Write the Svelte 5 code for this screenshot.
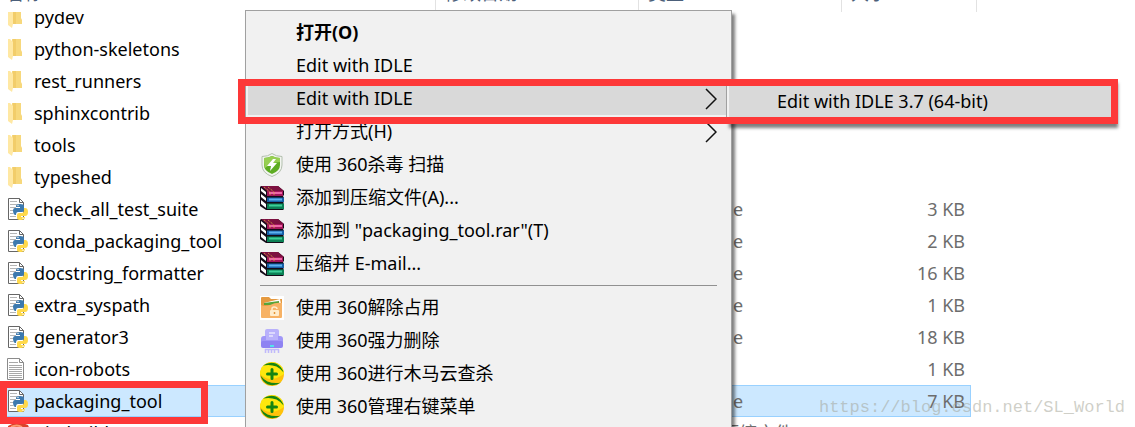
<script>
  const python = "Python File";

  // rows of the explorer list, top to bottom
  const files = [
    { name: "pydev", icon: "folder" },
    { name: "python-skeletons", icon: "folder" },
    { name: "rest_runners", icon: "folder" },
    { name: "sphinxcontrib", icon: "folder" },
    { name: "tools", icon: "folder" },
    { name: "typeshed", icon: "folder" },
    { name: "check_all_test_suite", icon: "python", type: python, size: "3 KB" },
    { name: "conda_packaging_tool", icon: "python", type: python, size: "2 KB" },
    { name: "docstring_formatter", icon: "python", type: python, size: "16 KB" },
    { name: "extra_syspath", icon: "python", type: python, size: "1 KB" },
    { name: "generator3", icon: "python", type: python, size: "18 KB" },
    { name: "icon-robots", icon: "text", type: "文本文档", size: "1 KB" },
    { name: "packaging_tool", icon: "python", type: python, size: "7 KB" },
    { name: "pip-build", icon: "archive", type: "WinRAR 压缩文件", size: "28 KB" },
  ];

  const menu = [
    { label: "打开(O)", bold: true },
    { label: "Edit with IDLE" },
    { label: "Edit with IDLE", sub: true, open: true },
    { label: "打开方式(H)", sub: true },
    { label: "使用 360杀毒 扫描", icon: "shield" },
    { label: "添加到压缩文件(A)...", icon: "rar" },
    { label: '添加到 "packaging_tool.rar"(T)', icon: "rar" },
    { label: "压缩并 E-mail...", icon: "rar" },
    null,
    { label: "使用 360解除占用", icon: "unlock" },
    { label: "使用 360强力删除", icon: "shred" },
    { label: "使用 360进行木马云查杀", icon: "safe" },
    { label: "使用 360管理右键菜单", icon: "safe" },
  ];

  let selected = $state("packaging_tool");
</script>

{#snippet fileIcon(kind)}
  <svg class="file-icon" viewBox="0 0 20 24" aria-hidden="true">
    {#if kind === "folder"}
      <path d="M4 2h9v11l1 2v4H4z" fill="#f7d87c" />
      <path d="M5 2h3v17H5z" fill="#f2cd6a" />
      <path d="M0 2h2l3 3v14l-1 4-4-3z" fill="#ffe8a3" />
    {:else if kind === "archive"}
      <path d="M0 5Q9-1 20 4l2 5v9H0z" fill="#dc432b" />
      <path d="M3 6q6-3 11 0" fill="none" stroke="#ff9d70" stroke-width="2" />
    {:else if kind === "text"}
      <path d="M-.5 1.500h12l4 4v17h-16z" fill="#fff" stroke="#8b8b8b" />
      <path d="M11.500 1.500v4h4" fill="none" stroke="#8b8b8b" />
      <path d="M1 5.500h9M1 8.500h13M1 10.500h13M1 12.500h13M1 14.500h13M1 16.500h13M1 18.500h13M1 20.500h13" stroke="#a8a8a8" />
    {:else}
      <path d="M.5 1.500h11l4 4v17H.5z" fill="#fff" stroke="#666" />
      <path d="M11.500 1.500v4h4" fill="none" stroke="#666" />
      <path d="M2 4.500h7M2 7.500h9M2 10.500h6M2 13.500h4M2 16.500h3M2 19.500h6" stroke="#b5b5b5" />
      <path d="M8 9q0-2 4-2t4 2v4q0 2-2 2h-4q-2 0-2 3H7q-2-1-2-4t2-3h5v-1H8z" fill="#3c79ae" />
      <path d="M16 11h1q3 0 3 4t-3 4h-4v1h4q0 3-4 3t-4-2v-3q0-2 2-2h3q2 0 2-3z" fill="#ffd94a" />
      <circle cx="10" cy="8.500" r=".7" fill="#fff" />
      <circle cx="15" cy="21.200" r=".7" fill="#fff" />
    {/if}
  </svg>
{/snippet}

{#snippet menuIcon(kind)}
  <svg class="menu-icon" viewBox="0 0 24 24" aria-hidden="true">
    {#if kind === "shield"}
      <path d="M12 .5q4 3 10 3V12q0 8-10 11.500Q2 20 2 12V3.500q6 0 10-3z" fill="#f2f5ef" stroke="#b3bfae" />
      <path d="M12 3q4 2 8 2v7q0 6-8 9-8-3-8-9V5q4 0 8-2z" fill="#5dac22" />
      <path d="M12 3q4 2 8 2v4Q12 9 5 15q-1-2-1-10 4 0 8-2z" fill="#97cf52" />
      <path d="M13 6 7 13h4l-1 5 7-8h-4l3-4z" fill="#fff" />
    {:else if kind === "rar"}
      <!-- three stacked books, spines to the right, pages to the left -->
      <path d="M1 0h17l6 5v4l-1 1 1 2v4l-1 1 1 1v5l-1 1H6l-6-4V1z" fill="#140b18" />
      <path d="M1 0h17l6 5H7z" fill="#7d1040" />
      <path d="M7 5h16v5H7z" fill="#a3165a" />
      <path d="M9 7h13" stroke="#ee66a8" stroke-width="2" />
      <path d="M7 11.500h17V16H7z" fill="#1760a8" />
      <path d="M9 13.500h13" stroke="#5fb2ef" stroke-width="2" />
      <path d="M7 17.500h17V23H7z" fill="#0b8055" />
      <path d="M9 19.500h13" stroke="#3ccf98" stroke-width="2" />
      <path d="M1 2l5 4v3L1 5zM1 8l5 4v3l-5-4zM1 14l5 4v4l-5-4z" fill="#fff" />
      <path d="M4 1l6 5v3M8 1l6 5v3" fill="none" stroke="#d8b23d" stroke-dasharray="1 1" />
    {:else if kind === "unlock"}
      <path d="M0 0h24v24H0z" fill="#fff" />
      <path d="M1 2q0-1 1-1h7l2 2h11v18H1z" fill="#e59a40" />
      <path d="M4 7l16-4 1 5H4z" fill="#fff" />
      <path d="M4 7l15-2v4H4z" fill="#58a43a" />
      <path d="M1 9q4 2 9 0 6-3 12-2v14q0 1-1 1H2q-1 0-1-1z" fill="#f7b265" />
      <path d="M12 15v-2q0-2 2-2 3 0 3 2" fill="none" stroke="#ffeccb" stroke-width="1.500" />
      <rect x="10" y="14" width="9" height="6" rx="1" fill="#ffeccb" />
      <path d="M14.500 16v2" stroke="#e59635" stroke-width="1.500" />
    {:else if kind === "shred"}
      <rect x="5" width="14" height="12" rx="2" fill="#b9b1fb" />
      <path d="M9 4h6M9 7h4" stroke="#fff" />
      <path d="M1 10q0-3 3-3h2v4h12V7h2q3 0 3 3v5H1z" fill="#a197f8" />
      <rect x="1" y="12" width="22" height="7" rx="2" fill="#8e82f2" />
      <path d="M10 17h4" stroke="#51e2ed" stroke-width="2" />
      <path d="M5 20.500h14M5.500 20v4M8.500 20v4M11.500 20v4M14.500 20v4M18.500 20v4" stroke="#c0b9fb" stroke-width="1.500" />
    {:else}
      <circle cx="12" cy="12" r="12" fill="#ffc20a" />
      <path d="M12 0a12 12 0 0 1 12 12Q10 22 0 12A12 12 0 0 1 12 0z" fill="#ffe70d" />
      <path d="M3 3.500q6-4 13-2 6 3 7.500 9-3-4-7-6Q10 2 3 3.500zM21 20.500q-6 4-13 2-6-3-7.500-9 3 4 7 6 6.500 2.500 13.500 1z" fill="#178412" />
      <path d="M12 7.500v9M7.500 12h9" stroke="#178412" stroke-width="3" stroke-linecap="round" />
    {/if}
  </svg>
{/snippet}

<main class="explorer">
  <table>
    <thead>
      <tr>
        <th>名称</th>
        <th>修改日期</th>
        <th>类型</th>
        <th>大小</th>
      </tr>
    </thead>
    <tbody>
      {#each files as file (file.name)}
        <tr class:selected={file.name === selected} onclick={() => (selected = file.name)}>
          <td class="name">{@render fileIcon(file.icon)}{file.name}</td>
          <td></td>
          <td>{file.type ?? ""}</td>
          <td class="size">{file.size ?? ""}</td>
        </tr>
      {/each}
    </tbody>
  </table>

  <div class="menu context" role="menu">
    {#each menu as item}
      {#if item}
        <button class="item" class:bold={item.bold} class:open={item.open} role="menuitem">
          <span class="slot">{#if item.icon}{@render menuIcon(item.icon)}{/if}</span>
          <span class="label">{item.label}</span>
          {#if item.sub}
            <svg class="arrow" viewBox="0 0 12 22" aria-hidden="true">
              <path d="M1 1l10 10L1 21" />
            </svg>
          {/if}
        </button>
      {:else}
        <hr />
      {/if}
    {/each}
  </div>

  <div class="menu submenu" role="menu">
    <button class="item open" role="menuitem">
      <span class="slot"></span>
      <span class="label">Edit with IDLE 3.7 (64-bit)</span>
    </button>
  </div>

  <div class="mark mark-menu"></div>
  <div class="mark mark-file"></div>
  <div class="watermark">https://blog.csdn.net/SL_World</div>
</main>

<style>
  :global(body) {
    margin: 0;
    background: #fff;
  }

  .explorer {
    position: relative;
    height: 100vh;
    overflow: hidden;
    font: 18px/32px "Noto Sans", "Noto Sans CJK SC", sans-serif;
    color: #000;
  }

  table,
  thead,
  tbody {
    display: block;
  }

  tr {
    display: grid;
    grid-template-columns: 436px 203px 203px 135px;
    box-sizing: border-box;
    width: fit-content;
    height: 32px;
  }

  thead tr {
    height: 12px;
    overflow: hidden;
  }

  th {
    display: flex;
    align-items: flex-end;
    height: 12px;
    box-sizing: border-box;
    padding: 0 0 7px 9px;
    border-right: 1px solid #e2e2e2;
    font-weight: 400;
    line-height: 24px;
    color: #4c607a;
  }

  th:first-child {
    padding-left: 6px;
  }

  /* the first row is partly scrolled under the header */
  tbody tr:first-child {
    height: 21px;
    overflow: hidden;
    align-content: end;
  }

  td {
    height: 32px;
    padding: 0 0 0 11px;
    color: #6d6d6d;
    white-space: nowrap;
  }

  .name {
    display: flex;
    align-items: center;
    gap: 6px;
    padding-left: 8px;
    color: #000;
  }

  .size {
    padding-right: 12px;
    text-align: right;
  }

  .selected {
    width: 971px;
    background: #cce8ff;
    box-shadow: inset 0 0 0 1px #99d1ff;
  }

  .file-icon {
    width: 20px;
    height: 24px;
    overflow: visible;
  }

  .menu {
    position: absolute;
    box-sizing: border-box;
    border: 1px solid #a0a0a0;
    background: #f1f1f1;
    box-shadow: 3px 4px 3px rgba(0, 0, 0, 0.5);
  }

  .context {
    top: 10px;
    left: 245px;
    width: 487px;
    padding: 5px 5px 12px 2px;
  }

  .submenu {
    top: 79px;
    left: 726px;
    width: 389px;
    padding: 5px 2px;
  }

  .item {
    display: flex;
    align-items: center;
    box-sizing: border-box;
    width: 100%;
    height: 33px;
    padding: 0 9px 0 12px;
    border: 0;
    background: none;
    font: inherit;
    line-height: 33px;
    color: #000;
    text-align: left;
  }

  .item:hover,
  .item.open {
    background: #d9d9d9;
  }

  .item.bold {
    font-weight: 700;
  }

  .slot {
    display: flex;
    width: 36px;
  }

  .label {
    flex: 1;
    white-space: nowrap;
  }

  .menu-icon {
    width: 24px;
    height: 24px;
  }

  .arrow {
    width: 12px;
    height: 22px;
    fill: none;
    stroke: #111;
    stroke-width: 1.5;
  }

  hr {
    margin: 5px 9px 5px 12px;
    border: 0;
    border-top: 1px solid #919191;
  }

  .mark {
    position: absolute;
    box-sizing: border-box;
    border: 7px solid #fd3838;
    pointer-events: none;
  }

  .mark-menu {
    top: 79px;
    left: 238px;
    width: 880px;
    height: 45px;
  }

  .mark-file {
    top: 381px;
    left: 0;
    width: 208px;
    height: 43px;
  }

  .watermark {
    position: absolute;
    right: 10px;
    bottom: 7px;
    font: 17px/24px "Liberation Mono", monospace;
    color: rgba(160, 160, 145, 0.5);
    pointer-events: none;
  }
</style>
